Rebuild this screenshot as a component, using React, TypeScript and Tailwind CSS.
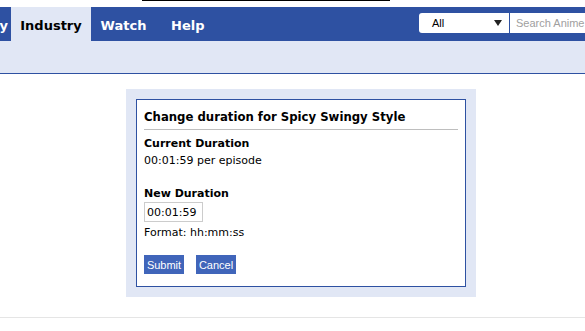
export default function App() {
  return (
    <div className="w-[585px] h-[331px] overflow-hidden bg-white font-['DejaVu_Sans',Verdana,sans-serif] text-[11px] leading-[14px] text-black">
      {/* top strip */}
      <div className="h-[7px]">
        <div className="ml-[142px] w-[248px] h-px bg-black" />
      </div>

      {/* nav bar */}
      <div className="h-[34px] bg-[#2e51a2] flex items-stretch text-[13px] font-bold">
        <div className="w-[11px] pr-[3px] pt-[3px] overflow-hidden flex justify-end items-center text-white whitespace-nowrap">
          Community
        </div>
        <div className="w-[80px] pt-[3px] bg-[#e1e7f5] flex items-center justify-center text-black">
          Industry
        </div>
        <div className="w-[65px] pt-[3px] flex items-center justify-center text-white">
          Watch
        </div>
        <div className="pl-[15px] pt-[3px] flex items-center text-white">Help</div>
        <div className="ml-auto flex items-start pt-[6px] gap-px font-normal">
          <div className="w-[90px] h-[20px] bg-white rounded-l-[3px] flex items-center justify-between pl-[13px] pr-[7px] font-['Liberation_Sans',Arial,sans-serif] text-[11px] text-black">
            <span>All</span>
            <svg width="8" height="6" viewBox="0 0 8 6">
              <path d="M0 0h8L4 6z" fill="#222" />
            </svg>
          </div>
          <div className="w-[75px] h-[20px] bg-white flex items-center pl-[6px] font-['Liberation_Sans',Arial,sans-serif] text-[11px] text-[#a0a0a0] whitespace-nowrap overflow-hidden">
            Search Anime, Manga, and more...
          </div>
        </div>
      </div>

      {/* sub band */}
      <div className="h-[33px] bg-[#e1e7f5] border-b border-[#2e51a2]" />

      {/* dialog */}
      <div className="pt-[15px]">
        <div className="ml-[126px] w-[350px] bg-[#e1e7f5] p-[10px]">
          <div className="border border-[#2e51a2] bg-white px-[7px] pt-[10px] pb-[12px]">
            <div className="font-bold text-[11.7px] pb-[5px] border-b border-[#bebebe]">
              Change duration for Spicy Swingy Style
            </div>
            <div className="mt-[7px] font-bold">Current Duration</div>
            <div className="mt-[3px]">00:01:59 per episode</div>
            <div className="mt-[19px] font-bold">New Duration</div>
            <input
              className="mt-px block w-[59px] h-[20px] border border-[#cccccc] px-[2px] text-[11px] outline-none"
              defaultValue="00:01:59"
            />
            <div className="mt-[4px]">Format: hh:mm:ss</div>
            <div className="mt-[15px] flex gap-[12px]">
              <button className="w-[40px] h-[19px] bg-[#4065ba] text-white font-['Liberation_Sans',Arial,sans-serif] text-[11px]">
                Submit
              </button>
              <button className="w-[40px] h-[19px] bg-[#4065ba] text-white font-['Liberation_Sans',Arial,sans-serif] text-[11px]">
                Cancel
              </button>
            </div>
          </div>
        </div>
      </div>

      {/* footer line */}
      <div className="mt-[20px] h-px bg-[#e5e5e5]" />
    </div>
  );
}
